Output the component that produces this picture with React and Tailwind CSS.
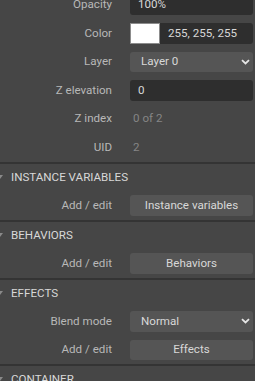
import React from 'react';

const Label = ({ children }) => (
  <div className="w-[112px] shrink-0 text-right text-[#b8b8b8]">{children}</div>
);

const Row = ({ label, children }) => (
  <div className="flex h-[28.5px] items-center gap-[18px] pr-[2px]">
    <Label>{label}</Label>
    <div className="flex-1 min-w-0">{children}</div>
  </div>
);

const TextInput = ({ value }) => (
  <div className="flex h-[20.5px] items-center rounded-[3px] bg-[#2e2e2e] px-[8px] text-[#d8d8d8]">
    {value}
  </div>
);

const Select = ({ value }) => (
  <div className="flex h-[20.5px] items-center justify-between rounded-[3px] bg-[#555555] pl-[11px] pr-[3px] text-[#d8d8d8]">
    <span>{value}</span>
    <svg width="9" height="6" viewBox="0 0 9 6" className="text-[#e6e6e6]">
      <path d="M1 1.2 L4.5 4.5 L8 1.2" fill="none" stroke="currentColor" strokeWidth="1.8" />
    </svg>
  </div>
);

const Button = ({ children }) => (
  <div className="flex h-[20.5px] items-center justify-center rounded-[3px] bg-[#555555] text-[#d8d8d8]">
    {children}
  </div>
);

const Header = ({ title }) => (
  <>
    <div className="h-[2px] bg-[#343434]" />
    <div className="flex h-[27.5px] items-center gap-[8px]">
      <svg width="6" height="5" viewBox="0 0 6 5" className="-ml-[3px] text-[#8a8a8a]">
        <path d="M0 0 L6 0 L3 4 Z" fill="currentColor" />
      </svg>
      <span className="uppercase text-[#d8d8d8]">{title}</span>
    </div>
  </>
);

export default function App() {
  return (
    <div
      className="h-[381px] w-[255px] overflow-hidden bg-[#464646] text-[11.6px]"
      style={{ fontFamily: 'Roboto, "Noto Sans", sans-serif' }}
    >
      <div className="-mt-[9.5px]">
        <Row label="Opacity">
          <TextInput value="100%" />
        </Row>
        <Row label="Color">
          <div className="flex h-[20.5px]">
            <div className="w-[30px] shrink-0 border border-[#8c8c8c] bg-white" />
            <div className="flex flex-1 items-center rounded-r-[3px] bg-[#2e2e2e] pl-[8px] text-[#d8d8d8]">
              255, 255, 255
            </div>
          </div>
        </Row>
        <Row label="Layer">
          <Select value="Layer 0" />
        </Row>
        <Row label="Z elevation">
          <TextInput value="0" />
        </Row>
        <Row label="Z index">
          <div className="pl-[3px] text-[#858585]">0 of 2</div>
        </Row>
        <Row label="UID">
          <div className="pl-[3px] text-[#858585]">2</div>
        </Row>

        <Header title="Instance variables" />
        <Row label="Add / edit">
          <Button>Instance variables</Button>
        </Row>

        <Header title="Behaviors" />
        <Row label="Add / edit">
          <Button>Behaviors</Button>
        </Row>

        <Header title="Effects" />
        <Row label="Blend mode">
          <Select value="Normal" />
        </Row>
        <Row label="Add / edit">
          <Button>Effects</Button>
        </Row>

        <Header title="Container" />
      </div>
    </div>
  );
}
